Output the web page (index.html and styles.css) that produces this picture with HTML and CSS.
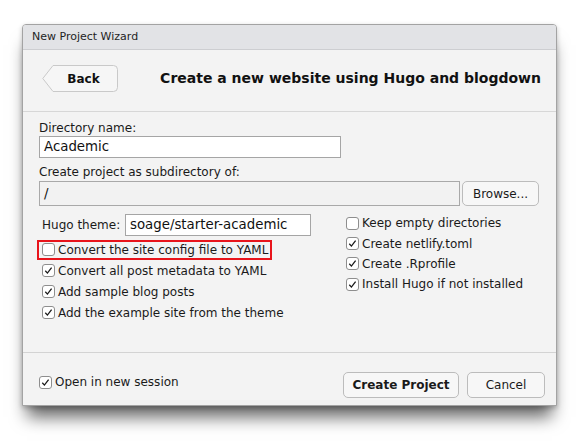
FILE: index.html
```html
<!DOCTYPE html>
<html>
<head>
<meta charset="utf-8">
<link rel="stylesheet" href="styles.css">
</head>
<body>
<div class="dialog">
  <div class="titlebar">New Project Wizard</div>
  <div class="header">
    <button class="back">
      <svg class="back-shape" width="77" height="28" viewBox="0 0 77 28"><path d="M11 0.5 H71.5 Q75.5 0.5 75.5 4.5 V22.5 Q75.5 26.5 71.5 26.5 H11 L0.8 13.5 Z" fill="#f6f6f6" stroke="#c9c9c9" stroke-width="1"/></svg>
      <span class="back-label">Back</span>
    </button>
    <h1 class="title">Create a new website using Hugo and blogdown</h1>
  </div>
  <div class="body">
    <div class="field-label">Directory name:</div>
    <div class="input name">Academic</div>
    <div class="field-label second">Create project as subdirectory of:</div>
    <div class="path-row">
      <div class="input path">/</div>
      <button class="btn browse">Browse...</button>
    </div>
    <div class="options">
      <div class="col left">
        <div class="theme-row"><span class="theme-label">Hugo theme:</span><div class="input theme">soage/starter-academic</div></div>
        <div class="cb-row first"><span class="opt highlight"><span class="cb"></span>Convert the site config file to YAML</span></div>
        <div class="cb-row"><span class="opt"><span class="cb"><svg width="11" height="11" viewBox="0 0 11 11"><path d="M2.3 5.8 L4.4 8.1 L8.6 2.6" fill="none" stroke="#1a1a1a" stroke-width="1.3"/></svg></span>Convert all post metadata to YAML</span></div>
        <div class="cb-row"><span class="opt"><span class="cb"><svg width="11" height="11" viewBox="0 0 11 11"><path d="M2.3 5.8 L4.4 8.1 L8.6 2.6" fill="none" stroke="#1a1a1a" stroke-width="1.3"/></svg></span>Add sample blog posts</span></div>
        <div class="cb-row"><span class="opt"><span class="cb"><svg width="11" height="11" viewBox="0 0 11 11"><path d="M2.3 5.8 L4.4 8.1 L8.6 2.6" fill="none" stroke="#1a1a1a" stroke-width="1.3"/></svg></span>Add the example site from the theme</span></div>
      </div>
      <div class="col right">
        <div class="cb-row r"><span class="opt"><span class="cb"></span>Keep empty directories</span></div>
        <div class="cb-row r"><span class="opt"><span class="cb"><svg width="11" height="11" viewBox="0 0 11 11"><path d="M2.3 5.8 L4.4 8.1 L8.6 2.6" fill="none" stroke="#1a1a1a" stroke-width="1.3"/></svg></span>Create netlify.toml</span></div>
        <div class="cb-row r"><span class="opt"><span class="cb"><svg width="11" height="11" viewBox="0 0 11 11"><path d="M2.3 5.8 L4.4 8.1 L8.6 2.6" fill="none" stroke="#1a1a1a" stroke-width="1.3"/></svg></span>Create .Rprofile</span></div>
        <div class="cb-row r"><span class="opt"><span class="cb"><svg width="11" height="11" viewBox="0 0 11 11"><path d="M2.3 5.8 L4.4 8.1 L8.6 2.6" fill="none" stroke="#1a1a1a" stroke-width="1.3"/></svg></span>Install Hugo if not installed</span></div>
      </div>
    </div>
  </div>
  <div class="footer">
    <div class="session"><span class="cb"><svg width="11" height="11" viewBox="0 0 11 11"><path d="M2.3 5.8 L4.4 8.1 L8.6 2.6" fill="none" stroke="#1a1a1a" stroke-width="1.3"/></svg></span>Open in new session</div>
    <div class="actions">
      <button class="btn create">Create Project</button>
      <button class="btn cancel">Cancel</button>
    </div>
  </div>
</div>
</body>
</html>
```

FILE: styles.css
```css
* { box-sizing: border-box; }
html, body { margin: 0; padding: 0; background: #ffffff; }
body {
  font-family: "DejaVu Sans", "Liberation Sans", sans-serif;
  font-size: 12px;
  color: #1a1a1a;
  padding-top: 24px;
  height: 443px;
}
.dialog {
  margin: 0 0 0 22px;
  width: 535px;
  border: 1px solid #a3a3a3;
  border-radius: 4px 4px 0 0;
  background: #f3f3f3;
  box-shadow: 0 16px 16px -5px rgba(0,0,0,0.6), 0 2px 5px rgba(0,0,0,0.22);
}
.titlebar {
  height: 25px;
  background: #e2e3e6;
  border-bottom: 1px solid #cdced1;
  border-radius: 3px 3px 0 0;
  font-size: 11px;
  line-height: 24px;
  padding-left: 9px;
  color: #1f1f1f;
}
.header {
  height: 62px;
  border-bottom: 1px solid #d7d7d7;
  display: flex;
  align-items: flex-start;
  padding: 15px 15px 0 19px;
}
.back {
  position: relative;
  width: 77px;
  height: 28px;
  padding: 0;
  border: 0;
  background: transparent;
  font-family: inherit;
  font-size: 12px;
  font-weight: bold;
  color: #111;
}
.back-shape { position: absolute; left: 0; top: 0; }
.back-label { position: relative; display: block; padding-left: 6px; line-height: 27px; }
.title {
  margin: 0 0 0 auto;
  font-size: 14px;
  font-weight: bold;
  line-height: 26px;
  color: #111;
}
.body {
  height: 241px;
  border-bottom: 1px solid #d3d3d3;
  padding: 9px 0 0 16px;
}
.field-label { line-height: 14px; height: 14px; margin-bottom: 1px; }
.field-label.second { margin-top: 7px; margin-bottom: 2px; }
.input {
  background: #ffffff;
  border: 1px solid #a5a5a5;
  font-size: 13.33px;
  padding-left: 4px;
  color: #111;
  white-space: nowrap;
}
.input.name { width: 302px; height: 22px; line-height: 20px; }
.path-row { display: flex; align-items: flex-start; }
.input.path { width: 421px; height: 25px; line-height: 23px; background: #f2f2f2; border-color: #a9a9a9; }
.btn {
  height: 26px;
  border: 1px solid #bcbcbc;
  border-radius: 5px;
  background: #f7f7f7;
  font-family: inherit;
  font-size: 12px;
  color: #1a1a1a;
  padding: 0;
}
.browse { width: 77px; height: 25px; margin-left: 2px; }
.options {
  display: grid;
  grid-template-columns: 307px 1fr;
  margin-top: 8px;
}
.theme-row { display: flex; align-items: center; height: 22px; padding-left: 3px; }
.theme-label { width: 83px; }
.input.theme { width: 186px; height: 22px; line-height: 20px; }
.cb-row { height: 21px; display: flex; align-items: center; }
.cb-row.first { margin-top: 3px; }
.col.right { margin-top: -1px; }
.cb-row.r { height: 20.4px; }
.opt { display: inline-flex; align-items: center; height: 16px; padding: 0 2px 0 3px; white-space: nowrap; }
.col.right .opt { padding-left: 0; }
.highlight { outline: 2px solid #e8141b; }
.cb {
  width: 13px;
  height: 13px;
  border: 1px solid #8e8e8e;
  border-radius: 3px;
  background: #ffffff;
  margin-right: 3px;
  display: inline-flex;
  align-items: center;
  justify-content: center;
  flex: none;
}
.footer {
  height: 52px;
  display: flex;
  align-items: flex-start;
  justify-content: space-between;
  padding: 19px 11px 0 16px;
}
.session { display: flex; align-items: center; height: 20px; margin-top: 0; }
.actions { display: flex; gap: 8px; }
.create { width: 116px; font-weight: bold; }
.cancel { width: 78px; }
```
